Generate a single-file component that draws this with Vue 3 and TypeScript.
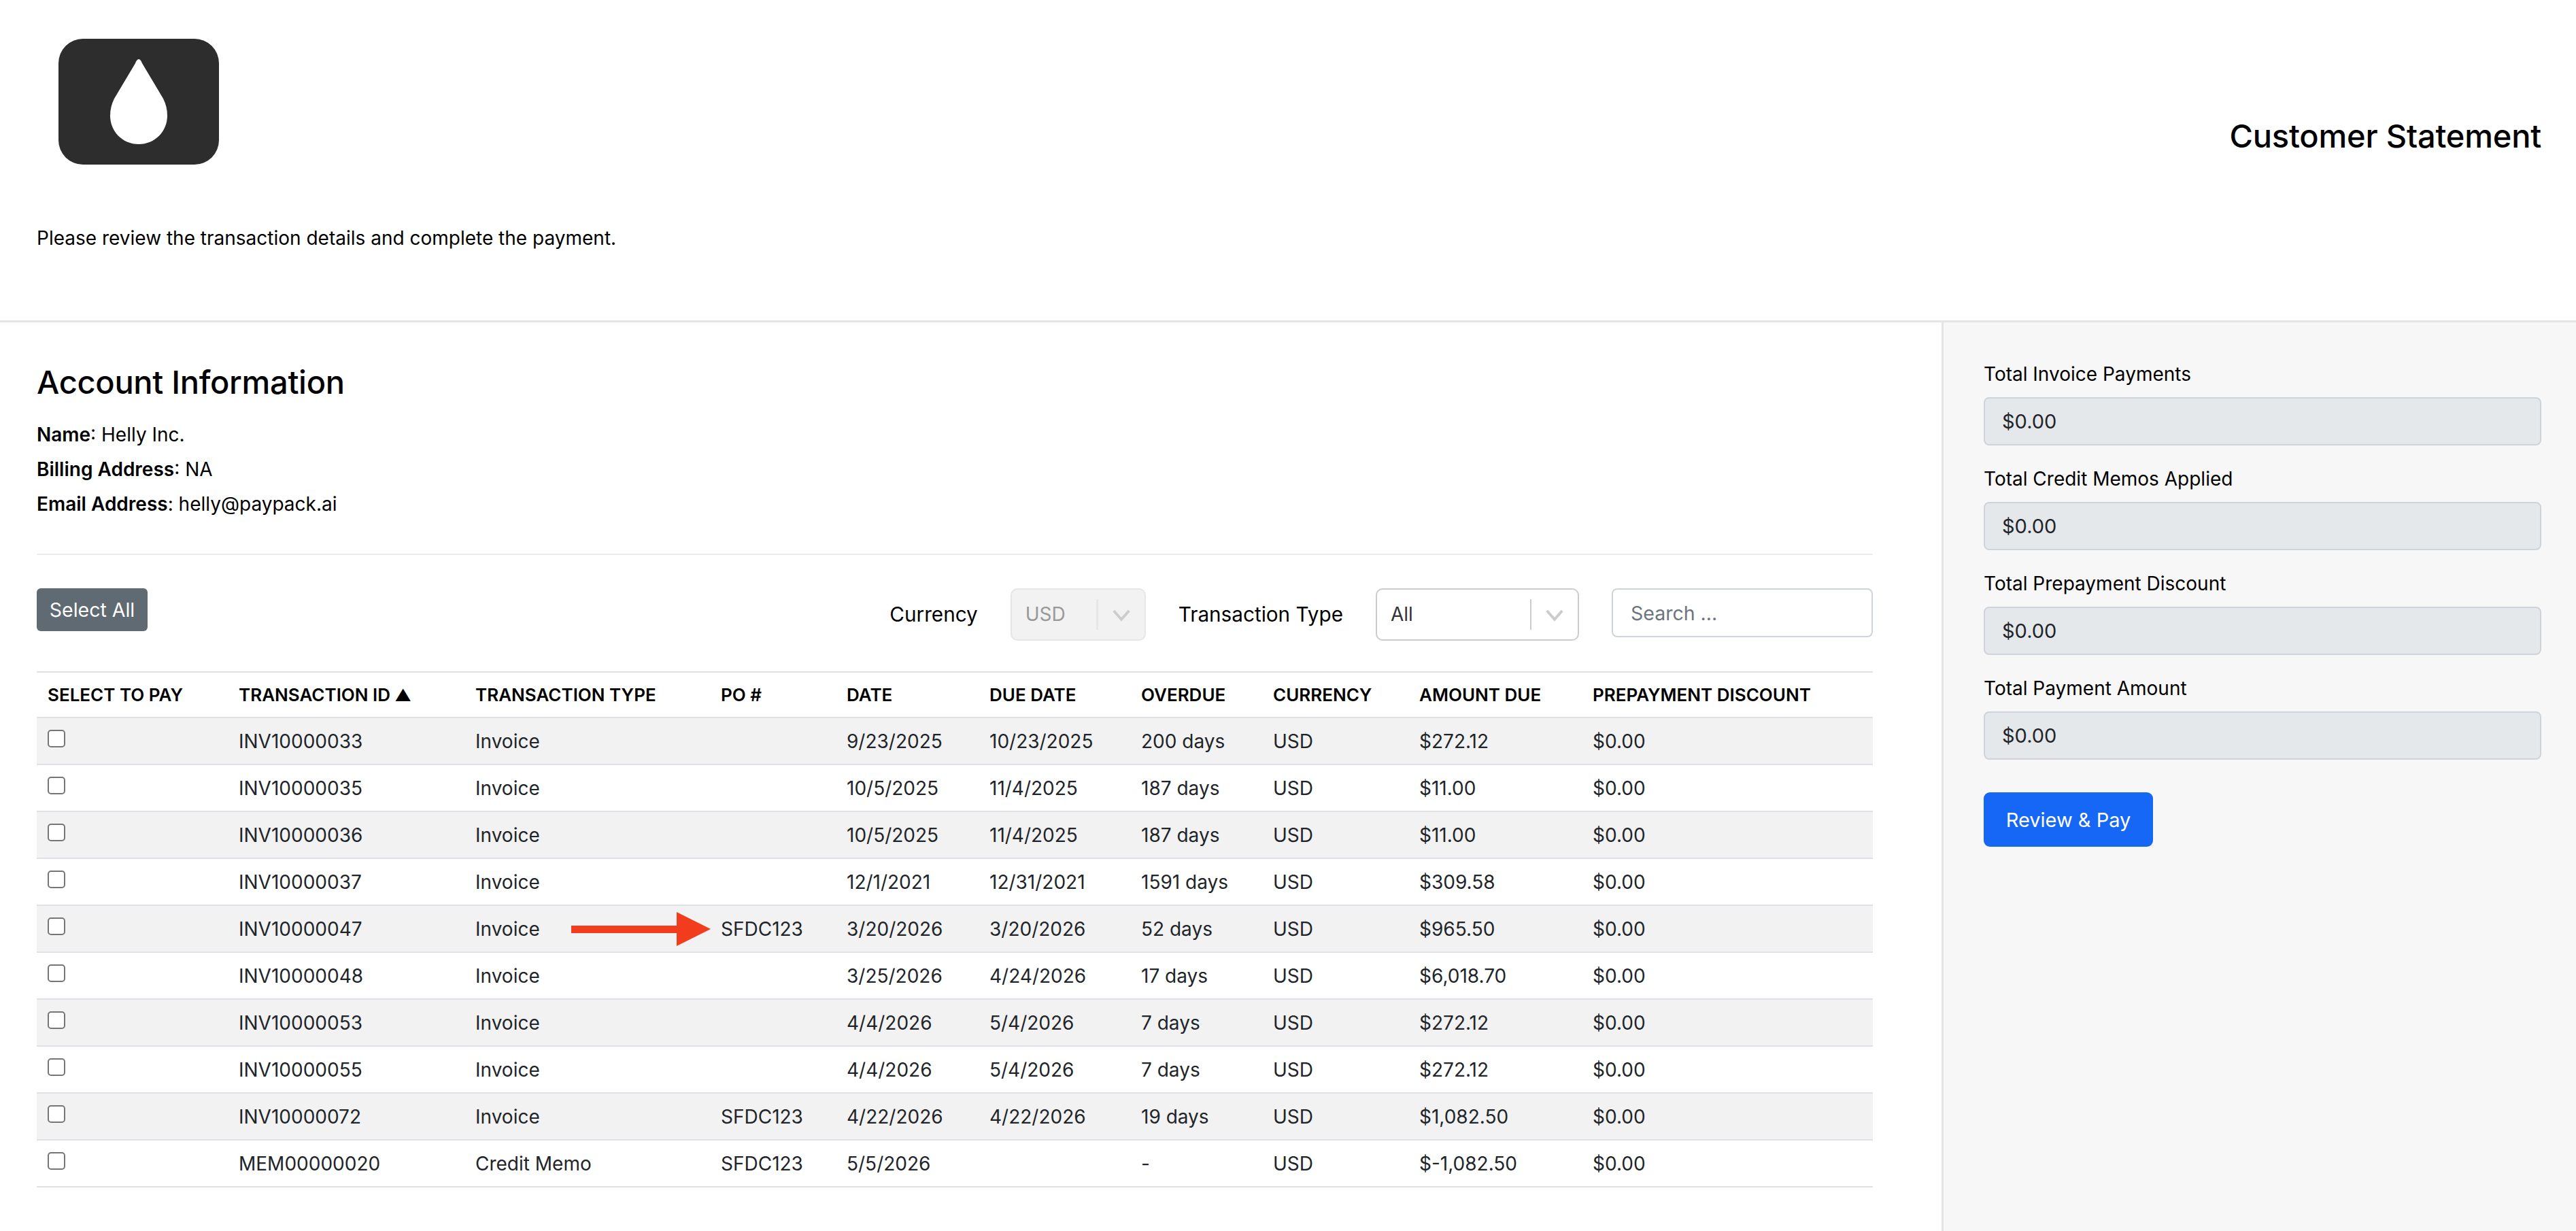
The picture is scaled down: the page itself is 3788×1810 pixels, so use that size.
<script setup lang="ts">
interface Row {
  id: string
  type: string
  po: string
  date: string
  due: string
  overdue: string
  amount: string
}

const columns = [
  { label: 'Select to pay', width: 281 },
  { label: 'Transaction ID', width: 348, sorted: true },
  { label: 'Transaction Type', width: 361 },
  { label: 'PO #', width: 185 },
  { label: 'Date', width: 210 },
  { label: 'Due Date', width: 223 },
  { label: 'Overdue', width: 194 },
  { label: 'Currency', width: 215 },
  { label: 'Amount Due', width: 255 },
  { label: 'Prepayment Discount', width: 428 },
]

const rows: Row[] = [
  { id: 'INV10000033', type: 'Invoice', po: '', date: '9/23/2025', due: '10/23/2025', overdue: '200 days', amount: '$272.12' },
  { id: 'INV10000035', type: 'Invoice', po: '', date: '10/5/2025', due: '11/4/2025', overdue: '187 days', amount: '$11.00' },
  { id: 'INV10000036', type: 'Invoice', po: '', date: '10/5/2025', due: '11/4/2025', overdue: '187 days', amount: '$11.00' },
  { id: 'INV10000037', type: 'Invoice', po: '', date: '12/1/2021', due: '12/31/2021', overdue: '1591 days', amount: '$309.58' },
  { id: 'INV10000047', type: 'Invoice', po: 'SFDC123', date: '3/20/2026', due: '3/20/2026', overdue: '52 days', amount: '$965.50' },
  { id: 'INV10000048', type: 'Invoice', po: '', date: '3/25/2026', due: '4/24/2026', overdue: '17 days', amount: '$6,018.70' },
  { id: 'INV10000053', type: 'Invoice', po: '', date: '4/4/2026', due: '5/4/2026', overdue: '7 days', amount: '$272.12' },
  { id: 'INV10000055', type: 'Invoice', po: '', date: '4/4/2026', due: '5/4/2026', overdue: '7 days', amount: '$272.12' },
  { id: 'INV10000072', type: 'Invoice', po: 'SFDC123', date: '4/22/2026', due: '4/22/2026', overdue: '19 days', amount: '$1,082.50' },
  { id: 'MEM00000020', type: 'Credit Memo', po: 'SFDC123', date: '5/5/2026', due: '', overdue: '-', amount: '$-1,082.50' },
]

const totals = [
  'Total Invoice Payments',
  'Total Credit Memos Applied',
  'Total Prepayment Discount',
  'Total Payment Amount',
]
</script>

<template>
  <div class="page">
    <header class="header">
      <div class="brand-row">
        <div class="logo">
          <svg class="drop" viewBox="0 0 84 125" aria-hidden="true">
            <path d="M42 0C44 0 46 3 47 6L78 58C82 66 84 74 84 83C84 106 66 125 42 125C18 125 0 106 0 83C0 74 2 66 6 58L37 6C38 3 40 0 42 0Z" fill="#fff" />
          </svg>
        </div>
        <h1 class="title">Customer Statement</h1>
      </div>
      <p class="intro">Please review the transaction details and complete the payment.</p>
    </header>

    <div class="body">
      <main class="main">
        <h2 class="section-title">Account Information</h2>
        <p class="info"><strong>Name</strong>: Helly Inc.</p>
        <p class="info"><strong>Billing Address</strong>: NA</p>
        <p class="info"><strong>Email Address</strong>: helly@paypack.ai</p>
        <hr class="divider" />

        <div class="toolbar">
          <button class="select-all" type="button">Select All</button>
          <div class="filters">
            <span class="filter-label">Currency</span>
            <div class="select select-currency is-disabled">
              <span class="select-value">USD</span>
              <span class="select-sep"></span>
              <svg class="chevron" viewBox="0 0 20 20" aria-hidden="true">
                <path d="M2.5 6L10 14.5L17.5 6" fill="none" stroke="currentColor" stroke-width="2.6" />
              </svg>
            </div>
            <span class="filter-label">Transaction Type</span>
            <div class="select select-type">
              <span class="select-value">All</span>
              <span class="select-sep"></span>
              <svg class="chevron" viewBox="0 0 20 20" aria-hidden="true">
                <path d="M2.5 6L10 14.5L17.5 6" fill="none" stroke="currentColor" stroke-width="2.6" />
              </svg>
            </div>
            <input class="search" type="text" placeholder="Search ..." />
          </div>
        </div>

        <table class="table">
          <colgroup>
            <col v-for="c in columns" :key="c.label" :style="{ width: c.width + 'px' }" />
          </colgroup>
          <thead>
            <tr>
              <th v-for="c in columns" :key="c.label">
                {{ c.label }}<span v-if="c.sorted" class="sort"> ▲</span>
              </th>
            </tr>
          </thead>
          <tbody>
            <tr v-for="r in rows" :key="r.id">
              <td><input class="check" type="checkbox" /></td>
              <td>{{ r.id }}</td>
              <td>{{ r.type }}</td>
              <td class="po-cell">
                <svg v-if="r.id === 'INV10000047'" class="arrow" viewBox="0 0 205 50" aria-hidden="true">
                  <path d="M0 20H155V0L205 25L155 50V31H0Z" fill="#f23c1e" />
                </svg>
                {{ r.po }}
              </td>
              <td>{{ r.date }}</td>
              <td>{{ r.due }}</td>
              <td>{{ r.overdue }}</td>
              <td>USD</td>
              <td>{{ r.amount }}</td>
              <td>$0.00</td>
            </tr>
          </tbody>
        </table>
      </main>

      <aside class="sidebar">
        <div v-for="t in totals" :key="t" class="field">
          <label class="field-label">{{ t }}</label>
          <div class="field-value">$0.00</div>
        </div>
        <button class="pay" type="button">Review &amp; Pay</button>
      </aside>
    </div>
  </div>
</template>

<style scoped>
.page {
  min-height: 1810px;
  display: flex;
  flex-direction: column;
  font-family: Inter, "Liberation Sans", sans-serif;
  font-size: 28px;
  color: #212529;
  background: #fff;
}
.header {
  height: 474px;
  box-sizing: border-box;
  border-bottom: 3px solid #e5e5e5;
  padding: 57px 51px 0 54px;
}
.brand-row {
  display: flex;
  justify-content: space-between;
  align-items: flex-start;
}
.logo {
  width: 236px;
  height: 185px;
  margin-left: 32px;
  border-radius: 36px;
  background: #2d2d2d;
  display: flex;
  align-items: center;
  justify-content: center;
}
.drop {
  width: 84px;
  height: 125px;
}
.title {
  margin: 113px 0 0;
  font-size: 47px;
  line-height: 60px;
  font-weight: 450;
  letter-spacing: -0.2px;
  color: #000;
}
.intro {
  margin: 90px 0 0;
  font-size: 28px;
  line-height: 36px;
  color: #000;
}
.body {
  flex: 1;
  display: flex;
}
.main {
  width: 2855px;
  box-sizing: border-box;
  padding: 58px 101px 0 54px;
}
.section-title {
  margin: 0 0 22px;
  font-size: 47px;
  line-height: 60px;
  font-weight: 450;
  letter-spacing: -0.3px;
  color: #000;
}
.info {
  margin: 0;
  font-size: 28px;
  line-height: 51px;
  color: #000;
}
.info strong {
  font-weight: 600;
}
.divider {
  margin: 47px 0 49px;
  border: 0;
  border-top: 2px solid #e9ecef;
}
.toolbar {
  display: flex;
  justify-content: space-between;
  align-items: flex-start;
  height: 122px;
}
.select-all {
  width: 163px;
  height: 63px;
  border: 0;
  border-radius: 6px;
  background: #5f6a73;
  color: #fff;
  font: 400 28.5px Inter, sans-serif;
  padding: 0;
}
.filters {
  display: flex;
  align-items: flex-start;
}
.filter-label {
  line-height: 76px;
  font-size: 29.7px;
  color: #000;
}
.filter-label:first-child {
  margin-right: 48px;
}
.select {
  height: 77px;
  box-sizing: border-box;
  border: 2.4px solid #ccc;
  border-radius: 10px;
  background: #fff;
  display: flex;
  align-items: center;
  color: #333;
}
.select-currency {
  width: 199px;
  margin-right: 48px;
}
.select-type {
  width: 299px;
  margin-left: 48px;
}
.select.is-disabled {
  background: #f2f2f2;
  border-color: #e6e6e6;
  color: #999;
}
.select-value {
  flex: 1;
  padding-left: 20px;
  font-size: 28px;
  position: relative;
  top: -1px;
}
.select-sep {
  width: 2.4px;
  height: 45px;
  background: #ccc;
}
.is-disabled .select-sep {
  background: #e6e6e6;
}
.chevron {
  width: 30px;
  height: 30px;
  margin: 0 19px;
  color: #ccc;
}
.search {
  width: 384px;
  height: 72px;
  box-sizing: border-box;
  margin-left: 48px;
  border: 2.4px solid #ced4da;
  border-radius: 8px;
  padding: 0 26px;
  font: 400 28.5px Inter, sans-serif;
  color: #212529;
  background: #fff;
  outline: none;
}
.search::placeholder {
  color: #6c757d;
}
.table {
  width: 2700px;
  table-layout: fixed;
  border-collapse: collapse;
  border-top: 2.4px solid #dee2e6;
}
.table th {
  height: 65px;
  padding: 0 16px;
  text-align: left;
  font-size: 26px;
  font-weight: 600;
  text-transform: uppercase;
  color: #000;
  white-space: nowrap;
}
.sort {
  font-size: 24px;
}
.table td {
  height: 69px;
  box-sizing: border-box;
  padding: 0 16px;
  border-top: 2.4px solid #dee2e6;
  border-bottom: 2.4px solid #dee2e6;
  font-size: 28px;
  color: #212529;
  white-space: nowrap;
}
.table tbody tr:nth-child(odd) td {
  background: #f2f2f2;
}
.po-cell {
  position: relative;
}
.arrow {
  position: absolute;
  left: -204px;
  top: 9px;
  width: 205px;
  height: 50px;
}
.check {
  appearance: none;
  display: block;
  width: 26px;
  height: 26px;
  margin: 0;
  box-sizing: border-box;
  border: 2.4px solid #767676;
  border-radius: 5px;
  background: #fff;
  position: relative;
  top: -4px;
}
.sidebar {
  flex: 1;
  box-sizing: border-box;
  border-left: 3px solid #e5e5e5;
  background: #f7f7f7;
  padding: 58px 51px 0 59px;
}
.field {
  margin-bottom: 31px;
}
.field-label {
  display: block;
  line-height: 36px;
  margin-bottom: 16px;
  font-size: 28px;
  color: #000;
}
.field-value {
  height: 71px;
  box-sizing: border-box;
  border: 2.4px solid #ced4da;
  border-radius: 8px;
  background: #e5e8eb;
  padding: 0 25px;
  display: flex;
  align-items: center;
  font-size: 29px;
  color: #212529;
}
.pay {
  display: block;
  width: 249px;
  height: 80px;
  margin-top: 48px;
  border: 0;
  border-radius: 9px;
  background: #1767f7;
  color: #fff;
  font: 400 29px Inter, sans-serif;
  padding: 0;
}
</style>
